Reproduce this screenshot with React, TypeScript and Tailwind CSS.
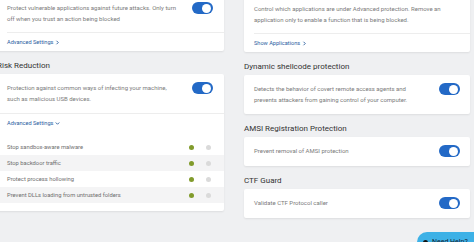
import React from 'react';

type Toggleable = {
  text: string[];
  on?: boolean;
};

function Toggle() {
  return (
    <div className="relative w-[21px] h-[12px] shrink-0 rounded-full bg-[#2369c6] -mt-[1px]">
      <div className="absolute right-[2px] top-[1.5px] w-[9px] h-[9px] rounded-full bg-white" />
    </div>
  );
}

function Chevron({ down }: { down?: boolean }) {
  return (
    <svg
      width="5"
      height="5"
      viewBox="0 0 10 10"
      className="ml-[2px]"
      fill="none"
      stroke="#2a5d9f"
      strokeWidth="1.8"
    >
      {down ? <path d="M1.5 3 L5 6.5 L8.5 3" /> : <path d="M3 1.5 L6.5 5 L3 8.5" />}
    </svg>
  );
}

function Heading({ children }: { children: React.ReactNode }) {
  return (
    <div className="mt-[9px] mb-[2px] h-[12px] leading-[12px] text-[8px] text-[#333]">
      {children}
    </div>
  );
}

function Body({ lines }: { lines: string[] }) {
  return (
    <div className="text-[6px] leading-[10.5px] text-[#7b7b7b]">
      {lines.map((l) => (
        <div key={l}>{l}</div>
      ))}
    </div>
  );
}

function LinkRow({ label, down }: { label: string; down?: boolean }) {
  return (
    <div className="h-[19px] flex items-center border-t border-[#ededed] text-[5.6px] text-[#2a5d9f]">
      {label}
      <Chevron down={down} />
    </div>
  );
}

function ToggleCard({ text }: Toggleable) {
  return (
    <div className="bg-white rounded-[2px] shadow-[0_1px_2px_rgba(0,0,0,0.08)] pl-[10px] pr-[10px] py-[9px] flex items-start justify-between">
      <Body lines={text} />
      <Toggle />
    </div>
  );
}

const mitigations = [
  'Stop sandbox-aware malware',
  'Stop backdoor traffic',
  'Protect process hollowing',
  'Prevent DLLs loading from untrusted folders',
];

export default function App() {
  return (
    <div
      className="relative w-[474px] h-[242px] overflow-hidden bg-[#eff0f2]"
      style={{ fontFamily: 'Roboto, "Open Sans", sans-serif' }}
    >
      <div className="flex gap-[20px] -ml-[3px] -mt-[8px]">
        {/* left column */}
        <div className="w-[227px] flex flex-col">
          <div className="bg-white rounded-[2px] shadow-[0_1px_2px_rgba(0,0,0,0.08)]">
            <div className="pl-[10px] pr-[11px] pt-[11px] pb-[8px] flex items-start justify-between">
              <Body
                lines={[
                  'Protect vulnerable applications against future attacks. Only turn',
                  'off when you trust an action being blocked',
                ]}
              />
              <Toggle />
            </div>
            <div className="pl-[10px]">
              <LinkRow label="Advanced Settings" />
            </div>
          </div>

          <Heading>Risk Reduction</Heading>
          <div className="bg-white rounded-[2px] shadow-[0_1px_2px_rgba(0,0,0,0.08)] pb-[8px]">
            <div className="pl-[10px] pr-[11px] pt-[9px] pb-[9px] flex items-start justify-between">
              <Body
                lines={[
                  'Protection against common ways of infecting your machine,',
                  'such as malicious USB devices.',
                ]}
              />
              <Toggle />
            </div>
            <div className="pl-[10px] border-t border-[#ededed]">
              <div className="h-[19px] flex items-center text-[5.6px] text-[#2a5d9f]">
                Advanced Settings
                <Chevron down />
              </div>
            </div>
            <div className="mt-[6px]">
              {mitigations.map((m, i) => (
                <div
                  key={m}
                  className={
                    'h-[16px] flex items-center pl-[10px] text-[5.8px] text-[#6f6f6f] ' +
                    (i % 2 === 1 ? 'bg-[#f4f4f5]' : 'bg-white')
                  }
                >
                  <span className="flex-1">{m}</span>
                  <span className="w-[5px] h-[5px] rounded-full bg-[#819b2c]" />
                  <span className="w-[5px] h-[5px] rounded-full bg-[#dadada] ml-[12px] mr-[13px]" />
                </div>
              ))}
            </div>
          </div>
        </div>

        {/* right column */}
        <div className="w-[226px] flex flex-col">
          <div className="bg-white rounded-[2px] shadow-[0_1px_2px_rgba(0,0,0,0.08)]">
            <div className="pl-[10px] pr-[10px] pt-[12px] pb-[8px]">
              <Body
                lines={[
                  'Control which applications are under Advanced protection. Remove an',
                  'application only to enable a function that is being blocked.',
                ]}
              />
            </div>
            <div className="pl-[10px]">
              <LinkRow label="Show Applications" />
            </div>
          </div>

          <Heading>Dynamic shellcode protection</Heading>
          <ToggleCard
            text={[
              'Detects the behavior of covert remote access agents and',
              'prevents attackers from gaining control of your computer.',
            ]}
          />

          <Heading>AMSI Registration Protection</Heading>
          <ToggleCard text={['Prevent removal of AMSI protection']} />

          <Heading>CTF Guard</Heading>
          <ToggleCard text={['Validate CTF Protocol caller']} />
        </div>
      </div>

      {/* floating help button */}
      <div className="absolute left-[417px] top-[232px] h-[20px] w-[80px] rounded-full bg-[#3db1e6] flex items-center pl-[6px] gap-[4px] text-[7px] text-[#123]">
        <span className="w-[5px] h-[5px] rounded-full bg-[#111]" />
        Need Help?
      </div>
    </div>
  );
}
